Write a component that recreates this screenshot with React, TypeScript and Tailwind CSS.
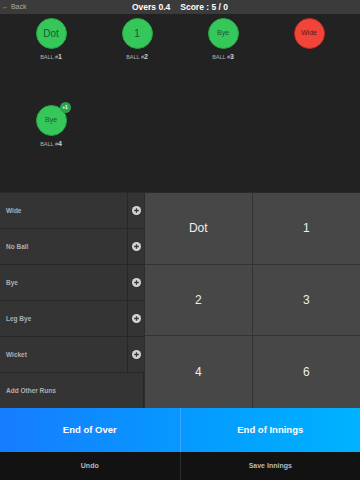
import React from 'react';

type Ball = { label: string; no?: number; kind: 'ok' | 'bad'; big?: boolean; extra?: string };

const balls: Ball[] = [
    { label: 'Dot', no: 1, kind: 'ok', big: true },
    { label: '1', no: 2, kind: 'ok', big: true },
    { label: 'Bye', no: 3, kind: 'ok' },
    { label: 'Wide', kind: 'bad' },
    { label: 'Bye', no: 4, kind: 'ok', extra: '+1' },
];

const extras = ['Wide', 'No Ball', 'Bye', 'Leg Bye', 'Wicket'];
const runs = ['Dot', '1', '2', '3', '4', '6'];

const PlusIcon = () => (
    <svg width="9" height="9" viewBox="0 0 10 10">
        <circle cx="5" cy="5" r="5" fill="#d4d4d4" />
        <path d="M5 2.4v5.2M2.4 5h5.2" stroke="#3a3a3a" strokeWidth="1.4" />
    </svg>
);

const BallCell = ({ ball }: { ball: Ball }) => (
    <div className="flex flex-col items-center h-[87px]">
        <div className="relative">
            <div
                className={`w-[31px] h-[31px] rounded-full flex items-center justify-center border ${
                    ball.kind === 'ok'
                        ? 'bg-[#35c75a] border-[#27a546] text-[#185c2a]'
                        : 'bg-[#f04538] border-[#c9271d] text-[#6a1510]'
                } ${ball.big ? 'text-[10px]' : 'text-[7px]'}`}
            >
                {ball.label}
            </div>
            {ball.extra && (
                <div className="absolute -top-[3px] -right-[4px] w-[11px] h-[11px] rounded-full bg-[#2aa44c] text-white text-[5px] font-bold flex items-center justify-center">
                    {ball.extra}
                </div>
            )}
        </div>
        {ball.no && (
            <div className="mt-[4px] text-[5.5px] text-[#b5b5b5] leading-none">
                BALL #<span className="text-[7px] font-bold text-[#d0d0d0]">{ball.no}</span>
            </div>
        )}
    </div>
);

export default function App() {
    return (
        <div className="w-[360px] h-[480px] flex flex-col bg-[#222] font-['Liberation_Sans',Arial,sans-serif] overflow-hidden">
            {/* header */}
            <div className="relative h-[14px] bg-[#3b3b3b] flex items-center justify-center">
                <span className="absolute left-[2px] text-[7px] text-[#aaa]">← Back</span>
                <span className="text-[8.5px] font-bold text-white">
                    Overs 0.4<span className="inline-block w-[10px]" />Score : 5 / 0
                </span>
            </div>

            {/* balls */}
            <div className="h-[178px] grid grid-cols-4 content-start px-2 pt-[4px]">
                {balls.map((b, i) => (
                    <BallCell key={i} ball={b} />
                ))}
            </div>

            {/* scoring pad */}
            <div className="flex h-[216px] border-t border-[#2a2a2a]">
                <div className="w-[144px] flex flex-col bg-[#343434]">
                    {extras.map((e) => (
                        <div key={e} className="h-[36px] flex border-b border-[#262626]">
                            <div className="flex-1 flex items-center pl-[6px] text-[6.5px] font-bold text-[#b0b0b0]">{e}</div>
                            <div className="w-[17px] flex items-center justify-center border-l border-[#262626]">
                                <PlusIcon />
                            </div>
                        </div>
                    ))}
                    <div className="flex-1 flex items-center pl-[6px] text-[6.5px] font-bold text-[#b0b0b0] border-r border-[#262626]">
                        Add Other Runs
                    </div>
                </div>
                <div className="flex-1 grid grid-cols-2 grid-rows-3 bg-[#474747] border-l border-[#2c2c2c]">
                    {runs.map((r, i) => (
                        <div
                            key={r}
                            className={`flex items-center justify-center text-[12px] text-[#eee] ${
                                i % 2 === 0 ? 'border-r border-[#333]' : ''
                            } ${i < 4 ? 'border-b border-[#333]' : ''}`}
                        >
                            {r}
                        </div>
                    ))}
                </div>
            </div>

            {/* end buttons */}
            <div className="h-[44px] flex bg-gradient-to-r from-[#167cff] to-[#00b3ff]">
                <div className="flex-1 flex items-center justify-center text-[9.5px] font-bold text-white border-r border-[#3aa6ff]">
                    End of Over
                </div>
                <div className="flex-1 flex items-center justify-center text-[9.5px] font-bold text-white">
                    End of Innings
                </div>
            </div>

            {/* actions */}
            <div className="flex-1 flex bg-[#121212]">
                <div className="flex-1 flex items-center justify-center text-[7px] font-bold text-[#bbb] border-r border-[#2e2e2e]">
                    Undo
                </div>
                <div className="flex-1 flex items-center justify-center text-[7px] font-bold text-[#bbb]">
                    Save Innings
                </div>
            </div>
        </div>
    );
}
